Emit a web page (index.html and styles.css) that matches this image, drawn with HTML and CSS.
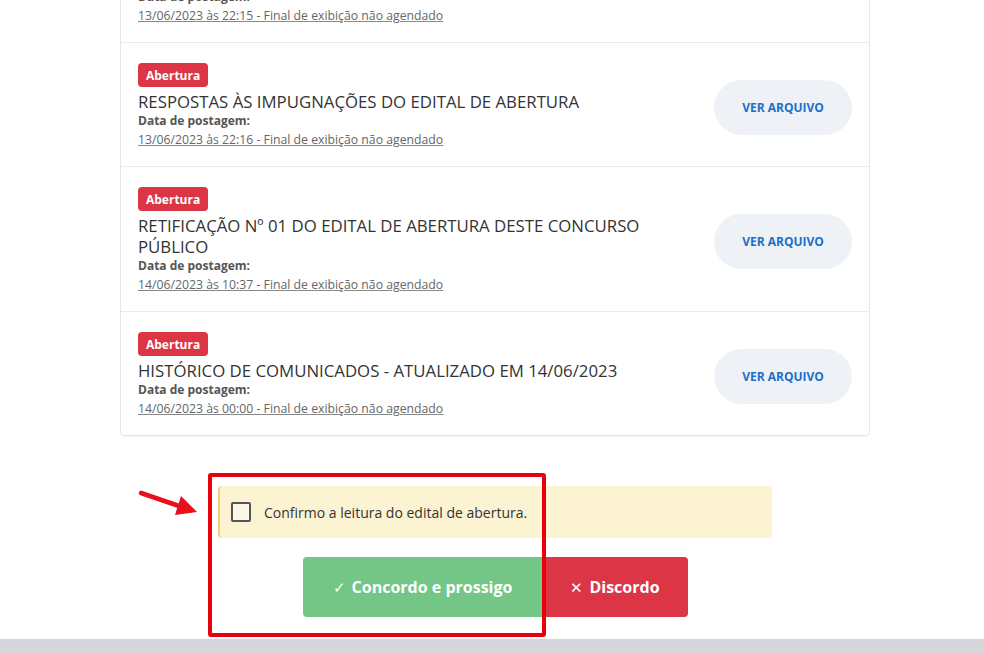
FILE: index.html
```html
<!DOCTYPE html>
<html lang="pt-BR">
<head>
<meta charset="utf-8">
<title>Edital de abertura</title>
<link rel="stylesheet" href="styles.css">
</head>
<body>
<div class="page">
  <main class="content">
    <section class="card">
      <div class="row">
        <div class="info">
          <span class="badge">Abertura</span>
          <div class="title">EDITAL DE ABERTURA DO CONCURSO PÚBLICO Nº 01/2023 - PREFEITURA</div>
          <div class="label">Data de postagem:</div>
          <a class="date" href="#">13/06/2023 às 22:15 - Final de exibição não agendado</a>
        </div>
        <a class="file-btn" href="#">VER ARQUIVO</a>
      </div>
      <div class="row">
        <div class="info">
          <span class="badge">Abertura</span>
          <div class="title">RESPOSTAS ÀS IMPUGNAÇÕES DO EDITAL DE ABERTURA</div>
          <div class="label">Data de postagem:</div>
          <a class="date" href="#">13/06/2023 às 22:16 - Final de exibição não agendado</a>
        </div>
        <a class="file-btn" href="#">VER ARQUIVO</a>
      </div>
      <div class="row">
        <div class="info">
          <span class="badge">Abertura</span>
          <div class="title">RETIFICAÇÃO Nº 01 DO EDITAL DE ABERTURA DESTE CONCURSO PÚBLICO</div>
          <div class="label">Data de postagem:</div>
          <a class="date" href="#">14/06/2023 às 10:37 - Final de exibição não agendado</a>
        </div>
        <a class="file-btn" href="#">VER ARQUIVO</a>
      </div>
      <div class="row">
        <div class="info">
          <span class="badge">Abertura</span>
          <div class="title">HISTÓRICO DE COMUNICADOS - ATUALIZADO EM 14/06/2023</div>
          <div class="label">Data de postagem:</div>
          <a class="date" href="#">14/06/2023 às 00:00 - Final de exibição não agendado</a>
        </div>
        <a class="file-btn" href="#">VER ARQUIVO</a>
      </div>
    </section>

    <section class="confirm">
      <label class="alert">
        <span class="checkbox"></span>
        <span class="alert-text">Confirmo a leitura do edital de abertura.</span>
      </label>
      <div class="actions">
        <button class="btn btn-agree" type="button"><span class="ico">✓</span>Concordo e prossigo</button>
        <button class="btn btn-disagree" type="button"><span class="ico">✕</span>Discordo</button>
      </div>
    </section>
  </main>
  <footer class="footer"></footer>

  <div class="highlight"></div>
  <svg class="arrow" width="64" height="34" viewBox="0 0 64 34" aria-hidden="true">
    <line x1="5" y1="7" x2="46" y2="21" stroke="#e8101a" stroke-width="4.5" stroke-linecap="round"/>
    <polygon points="61,26 45,10 39,29" fill="#e8101a"/>
  </svg>
</div>
</body>
</html>
```

FILE: styles.css
```css
* { box-sizing: border-box; }

html, body {
  margin: 0;
  padding: 0;
  background: #ffffff;
  font-family: "Open Sans", "Noto Sans", "Liberation Sans", sans-serif;
  color: #333;
  overflow: hidden;
}

.page {
  position: relative;
  width: 984px;
  height: 654px;
  display: flex;
  flex-direction: column;
}

.content {
  width: 750px;
  margin-left: 120px;
}

.card {
  margin-top: -103px;
  border: 1px solid #e6e6e6;
  border-radius: 5px;
  background: #fff;
  box-shadow: 0 1px 2px rgba(0,0,0,0.05);
}

.row {
  display: flex;
  align-items: center;
  gap: 20px;
  padding: 20px 17px 15px 17px;
  border-bottom: 1px solid #ebebeb;
}
.row:last-child { border-bottom: none; }

.info {
  flex: 1;
  display: flex;
  flex-direction: column;
  align-items: flex-start;
}

.badge {
  display: inline-flex;
  align-items: center;
  height: 24px;
  padding: 0 8px;
  margin-bottom: 4px;
  background: #dc3545;
  color: #fff;
  font-size: 12px;
  font-weight: 700;
  border-radius: 4px;
}

.title {
  font-size: 16.8px;
  line-height: 21px;
  color: #333;
  font-weight: 500;
}

.label {
  font-size: 12px;
  line-height: 17px;
  font-weight: 700;
  color: #555;
}

.date {
  font-size: 12.25px;
  line-height: 22px;
  color: #666;
  text-decoration: underline;
  text-decoration-color: #888;
}

.file-btn {
  flex: none;
  width: 138px;
  height: 55px;
  border-radius: 28px;
  background: #eef2f7;
  color: #1c6fc7;
  font-size: 12px;
  font-weight: 700;
  text-decoration: none;
  display: flex;
  align-items: center;
  justify-content: center;
}

.confirm {
  display: flex;
  flex-direction: column;
  align-items: center;
  margin-top: 50px;
}

.alert {
  width: 554px;
  height: 52px;
  background: #fcf3d3;
  border-left: 2px solid #f2d36b;
  border-radius: 4px;
  display: flex;
  align-items: center;
  padding-left: 11px;
  gap: 13px;
}

.checkbox {
  width: 20px;
  height: 20px;
  border: 2px solid #555;
  border-radius: 2px;
  background: #fdf8e6;
  flex: none;
}

.alert-text {
  font-size: 14px;
  color: #333;
}

.actions {
  display: flex;
  margin-top: 19px;
}

.btn {
  height: 60px;
  border: none;
  color: #fff;
  font-family: inherit;
  font-size: 16px;
  font-weight: 700;
  display: flex;
  align-items: center;
  justify-content: center;
  gap: 6px;
}
.ico { font-weight: 400; font-size: 15px; }

.btn-agree {
  width: 240px;
  background: #74c686;
  border-radius: 4px 0 0 4px;
}
.btn-disagree {
  width: 145px;
  background: #dc3545;
  border-radius: 0 4px 4px 0;
}

.footer {
  margin-top: auto;
  height: 15px;
  background: #d5d7db;
}

.highlight {
  position: absolute;
  left: 208px;
  top: 473px;
  width: 338px;
  height: 164px;
  border: 4px solid #e8000d;
  border-radius: 3px;
}

.arrow {
  position: absolute;
  left: 136px;
  top: 486px;
}
```
